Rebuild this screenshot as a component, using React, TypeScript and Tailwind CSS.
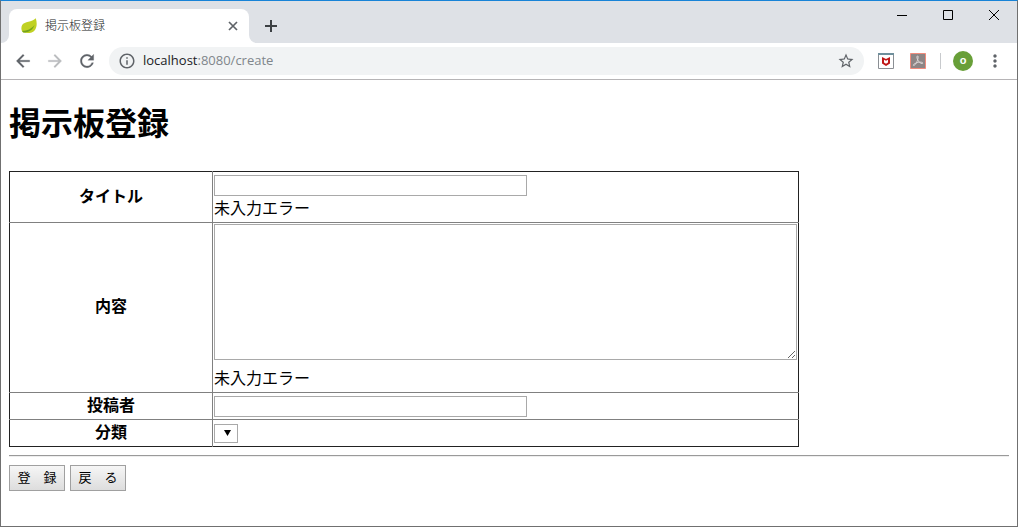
import React from 'react';
import { MdInfoOutline, MdMoreVert, MdStarBorder } from 'react-icons/md';

const LeafIcon: React.FC = () => (
  <svg className="h-4 w-4 shrink-0" viewBox="0 0 16 16" aria-hidden="true">
    <path d="M14.800.3C16 4 16.200 9 14 12C11.500 15.300 6.500 15.600 2.600 14.600C.3 13.800-.3 9.500 1.200 7C3.500 3.200 11 4.500 14.800.3Z" fill="#c0d123" />
    <path d="M1.500 12.800C6 12.800 10.500 11 13.500 7C12.500 11.500 7.500 14.600 2.600 14.600C1.600 14.300 1.200 13.600 1.500 12.800Z" fill="#74a31c" />
  </svg>
);

const ShieldIcon: React.FC = () => (
  <svg className="h-4 w-4" viewBox="0 0 16 16" aria-hidden="true">
    <path d="M.5.5h15v15H.5z" fill="#fff" stroke="#8b8f94" />
    <path d="M0 0h16v2H0z" fill="#6f8f9c" />
    <path d="M4 4l4 2 4-2v6.500L8 13l-4-2.500z" fill="#c01818" />
    <path d="M6 6.800l2 1 2-1v2.700L8 10.800 6 9.500z" fill="#fff" />
  </svg>
);

const PdfIcon: React.FC = () => (
  <svg className="h-4 w-4" viewBox="0 0 16 16" aria-hidden="true">
    <path d="M.5.5h15v15H.5z" fill="#8d8585" stroke="#f08b7c" />
    <path
      d="M7.300 3c1.200-.6 1 2 .1 4.500C6.500 10 4.500 13 3.500 12.500c-1-.8 2-2.700 5-3.200 2.500-.4 4.500 0 4.300.9-.3 1-2.800 0-4.300-2C7 6.300 6.500 3.600 7.300 3z"
      fill="none"
      stroke="#dcd6d6"
    />
  </svg>
);

interface NavIconProps {
  path: string;
}

const NavIcon: React.FC<NavIconProps> = ({ path }) => (
  <svg className="h-5 w-5" viewBox="0 0 24 24" fill="currentColor" stroke="currentColor" strokeWidth="0.300" aria-hidden="true">
    <path d={path} />
  </svg>
);

const TabStrip: React.FC = () => (
  <div className="flex h-[42px] items-start bg-[#dee1e6]">
    <div className="h-[42px] w-2 overflow-hidden bg-white">
      <div className="h-full rounded-br-lg bg-[#dee1e6]" />
    </div>
    <div className="mt-2 flex h-[34px] w-60 items-center rounded-t-lg bg-white pr-[10px] pl-3">
      <LeafIcon />
      <span className="ml-2 flex-1 text-xs font-light text-[#202124]">掲示板登録</span>
      <button type="button" aria-label="タブを閉じる">
        <svg className="h-3 w-3" viewBox="0 0 12 12" stroke="#5f6368" strokeWidth="1.700">
          <path d="M2 2l8 8M10 2l-8 8" />
        </svg>
      </button>
    </div>
    <div className="h-[42px] w-2 overflow-hidden bg-white">
      <div className="h-full rounded-bl-lg bg-[#dee1e6]" />
    </div>
    <button type="button" aria-label="新しいタブ" className="mt-[19px] ml-2">
      <svg className="h-3 w-3" viewBox="0 0 12 12" stroke="#3c4043" strokeWidth="2">
        <path d="M6 0v12M0 6h12" />
      </svg>
    </button>
    <div className="ml-auto flex h-7">
      <button type="button" aria-label="最小化" className="flex w-[46px] items-center justify-center">
        <svg className="h-[10px] w-[10px]" viewBox="0 0 10 10" stroke="#000">
          <path d="M0 5.500h10" />
        </svg>
      </button>
      <button type="button" aria-label="最大化" className="flex w-[46px] items-center justify-center">
        <svg className="h-[10px] w-[10px]" viewBox="0 0 10 10" stroke="#000" fill="none">
          <path d="M.5.5h9v9h-9z" />
        </svg>
      </button>
      <button type="button" aria-label="閉じる" className="flex w-[46px] items-center justify-center">
        <svg className="h-[10px] w-[10px]" viewBox="0 0 10 10" stroke="#000">
          <path d="M0 0l10 10M10 0L0 10" />
        </svg>
      </button>
    </div>
  </div>
);

const Toolbar: React.FC = () => (
  <div className="flex h-[37px] items-center border-b border-[#b6b4b6] bg-white pr-3 pl-3 text-[#5f6368]">
    <button type="button" aria-label="戻る">
      <NavIcon path="M20 11H7.830l5.590-5.590L12 4l-8 8 8 8 1.410-1.410L7.830 13H20v-2z" />
    </button>
    <button type="button" aria-label="進む" className="ml-3 text-[#babcbe]">
      <NavIcon path="M12 4l-1.410 1.410L16.170 11H4v2h12.170l-5.580 5.590L12 20l8-8z" />
    </button>
    <button type="button" aria-label="再読み込み" className="ml-3">
      <NavIcon path="M17.650 6.350A7.958 7.958 0 0012 4c-4.420 0-7.990 3.580-7.990 8s3.570 8 7.990 8c3.730 0 6.840-2.550 7.730-6h-2.080A5.990 5.990 0 0112 18c-3.310 0-6-2.690-6-6s2.690-6 6-6c1.660 0 3.140.690 4.220 1.780L13 11h7V4l-2.350 2.350z" />
    </button>
    <div className="ml-3 flex h-7 flex-1 items-center rounded-full bg-[#f1f3f4] px-[9px]">
      <MdInfoOutline size={18} />
      <span className="ml-[7px] flex-1 font-['Open_Sans','Liberation_Sans',sans-serif] text-[13px] text-[#80868b]">
        <span className="text-[#202124]">localhost</span>:8080/create
      </span>
      <button type="button" aria-label="ブックマーク">
        <MdStarBorder size={18} />
      </button>
    </div>
    <div className="ml-[14px] flex items-center gap-4">
      <ShieldIcon />
      <PdfIcon />
    </div>
    <div className="ml-[14px] h-4 w-px bg-[#c8cacd]" />
    <div className="ml-3 flex h-5 w-5 items-center justify-center rounded-full bg-[#689f38] pb-px text-[11px] font-bold text-white">
      o
    </div>
    <button type="button" aria-label="メニュー" className="ml-3">
      <MdMoreVert size={20} />
    </button>
  </div>
);

interface FieldRowProps {
  id: string;
  label: string;
  children: React.ReactNode;
}

const FieldRow: React.FC<FieldRowProps> = ({ id, label, children }) => (
  <tr className="h-[27px] border-b border-[#808080] last:border-b-0">
    <th scope="row" className="w-[203px] border-r border-[#808080] px-px pb-px align-middle leading-[22px] font-bold">
      <label htmlFor={id}>{label}</label>
    </th>
    <td className="p-px align-top">{children}</td>
  </tr>
);

const buttonClass =
  'h-[26px] w-14 border border-[#a0a0a0] bg-linear-to-b from-[#f6f6f6] to-[#dddddd] text-[13px]';
const inputClass = 'block h-[21px] w-[313px] border border-[#a9a9a9] px-px text-[13px]';

const CreateForm: React.FC = () => (
  <form className="px-2 pt-5" onSubmit={(e) => e.preventDefault()}>
    <h1 className="text-[32px] leading-[48px] font-bold">掲示板登録</h1>
    <table className="mt-[23px] w-full max-w-[790px] table-fixed border-collapse border border-[#222222] text-base">
      <tbody>
        <FieldRow id="title" label="タイトル">
          <input id="title" type="text" className={`${inputClass} mt-[2px]`} />
          <p className="leading-[25px]">未入力エラー</p>
        </FieldRow>
        <FieldRow id="content" label="内容">
          <textarea id="content" className="block h-[136px] w-full resize border border-[#a9a9a9] p-[2px] text-[13px]" />
          <p className="pt-[6px] leading-[25px]">未入力エラー</p>
        </FieldRow>
        <FieldRow id="author" label="投稿者">
          <input id="author" type="text" className={`${inputClass} mt-[2px]`} />
        </FieldRow>
        <FieldRow id="category" label="分類">
          <div className="relative mt-[3px] w-6">
            <select id="category" className="block h-[19px] w-6 appearance-none border border-[#a9a9a9] bg-white" />
            <svg className="pointer-events-none absolute top-[6px] right-[7px] h-[6px] w-[7px]" viewBox="0 0 7 6">
              <path d="M0 0h7L3.500 6z" fill="#000" />
            </svg>
          </div>
        </FieldRow>
      </tbody>
    </table>
    <hr className="mt-2 h-[2px] border-t border-b border-t-[#9a9a9a] border-b-[#eeeeee]" />
    <div className="mt-2 flex gap-[5px]">
      <button type="submit" className={buttonClass}>登　録</button>
      <button type="button" className={buttonClass}>戻　る</button>
    </div>
  </form>
);

const App: React.FC = () => {
  return (
    <div className="min-h-screen border border-t-[#1883d7] border-r-[#707070] border-b-[#707070] border-l-[#707070] bg-white font-['Liberation_Sans','Noto_Sans_CJK_JP',sans-serif] text-black">
      <TabStrip />
      <Toolbar />
      <CreateForm />
    </div>
  );
};

export default App;
